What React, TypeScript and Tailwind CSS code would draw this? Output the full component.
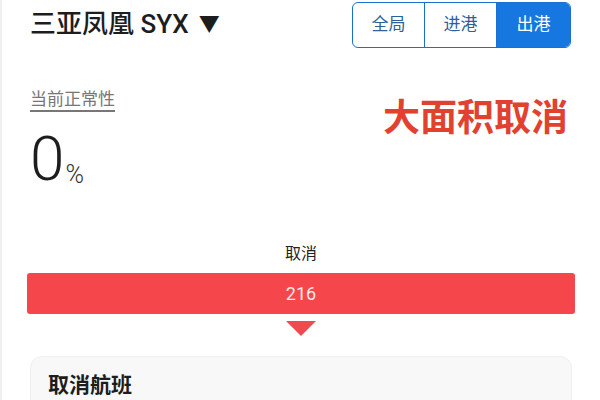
import React from 'react';

const font = { fontFamily: 'Roboto, "Noto Sans CJK SC", sans-serif' };

export default function App() {
  const tabs = ['全局', '进港', '出港'];
  const active = 2;

  return (
    <div className="w-[600px] h-[400px] overflow-hidden bg-white border-l-2 border-[#f0f0f0]" style={font}>
      <div className="flex items-start justify-between pl-[28px] pr-[29px]">
        <div className="flex items-center gap-[10px] mt-[9px] text-[26px] leading-[30px] font-medium text-[#1d1d1d]">
          <span>三亚凤凰 SYX</span>
          <span className="text-[21px]">▼</span>
        </div>
        <div className="flex mt-[2px] h-[46px] border-[1.5px] border-[#1a6fd0] rounded-[6px] overflow-hidden">
          {tabs.map((t, i) => (
            <div
              key={t}
              className={
                i === active
                  ? 'w-[73px] flex items-center justify-center text-[17px] bg-[#1677e0] text-white'
                  : 'w-[72px] flex items-center justify-center text-[17px] text-[#2f5f95] border-r-[1.5px] border-[#1a6fd0]'
              }
            >
              {t}
            </div>
          ))}
        </div>
      </div>

      <div className="flex justify-between pl-[28px] pr-[32px] mt-[40px]">
        <div>
          <div className="text-[17px] leading-[22px] text-[#777] underline underline-offset-[5px] decoration-[1.5px]">当前正常性</div>
          <div className="flex items-end mt-[21px]">
            <span className="text-[62px] leading-[56px] font-light text-[#1d1d1d]">0</span>
            <span className="text-[25px] leading-[24px] font-light text-[#333] ml-[1px]">%</span>
          </div>
        </div>
        <div className="text-[37px] leading-[44px] font-bold text-[#e2412f] mt-[9px]">大面积取消</div>
      </div>

      <div className="flex flex-col items-center mt-[57px]">
        <div className="text-[16px] leading-[20px] text-[#222]">取消</div>
        <div className="mt-[9px] w-[548px] h-[41px] rounded-[3px] bg-[#f5464b] flex items-center justify-center text-[18px] text-[#ffeaea]">
          216
        </div>
        <div className="mt-[7px] w-0 h-0 border-l-[15px] border-r-[15px] border-t-[15px] border-l-transparent border-r-transparent border-t-[#ee4a4f]" />
      </div>

      <div className="mx-[28px] mt-[20px] h-[80px] rounded-[12px] bg-[#f8f8f8] border border-[#f0f0f0] px-[17px] pt-[14px]">
        <div className="text-[21px] leading-[28px] font-bold text-[#1d1d1d]">取消航班</div>
      </div>
    </div>
  );
}
